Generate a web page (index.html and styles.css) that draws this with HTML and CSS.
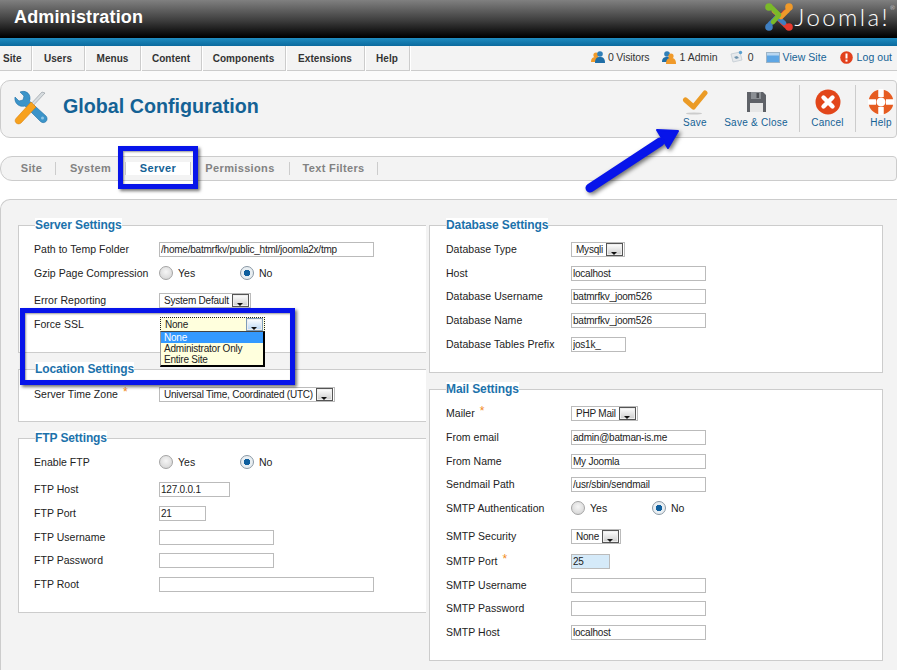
FILE: index.html
```html
<!DOCTYPE html>
<html lang="en">
<head>
<meta charset="utf-8">
<title>Global Configuration</title>
<link rel="stylesheet" href="styles.css">
</head>
<body>
<div class="page">
  <header class="top">
    <h1 class="brand">Administration</h1>
    <div class="logo">
      <svg class="logo-mark" width="30" height="30" viewBox="0 0 30 30" fill="none" stroke-width="4.600" stroke-linecap="round" stroke-linejoin="round">
        <path stroke="#e8392e" d="M25 25 Q22 25 20 22 L15 17 L21 10"/>
        <path stroke="#3f7fc1" d="M5 25 Q5 22 8 20 L13 15 L20 21"/>
        <path stroke="#f09a2a" d="M25 5 Q25 8 22 10 L17 15 L10 9"/>
        <path stroke="#7ab929" d="M5 5 Q8 5 10 8 L15 13 L9 20"/>
        <circle cx="5" cy="5" r="3.800" fill="#7ab929"/><circle cx="25" cy="5" r="3.800" fill="#f09a2a"/>
        <circle cx="5" cy="25" r="3.800" fill="#3f7fc1"/><circle cx="25" cy="25" r="3.800" fill="#e8392e"/>
      </svg>
      <span class="logo-text">Joomla!<sup class="tm">®</sup></span>
    </div>
  </header>
  <div class="band"></div>
  <nav class="menu">
    <ul class="menu-list">
      <li class="first">Site</li><li>Users</li><li>Menus</li><li>Content</li><li>Components</li><li>Extensions</li><li>Help</li>
    </ul>
    <div class="status">
      <span class="stat stat-visitors"><svg width="14" height="14" viewBox="0 0 14 14"><circle cx="5" cy="5" r="2.600" fill="#f09a2a"/><path d="M0 12c0-4 2-5 5-5s5 1 5 5z" fill="#f09a2a"/><circle cx="9" cy="4" r="2.800" fill="#2f7fb8"/><path d="M4 13c0-5 2-6 5-6s5 1 5 6z" fill="#1f6ea6"/></svg>0 Visitors</span>
      <span class="stat stat-admin"><svg width="14" height="14" viewBox="0 0 14 14"><circle cx="5" cy="4" r="2.800" fill="#2f7fb8"/><path d="M0 12c0-4 2-5 5-5s5 1 5 5z" fill="#1f6ea6"/><circle cx="9" cy="6" r="2.600" fill="#f09a2a"/><path d="M4 14c0-5 2-6 5-6s5 1 5 6z" fill="#f09a2a"/></svg>1 Admin</span>
      <span class="stat stat-msg"><svg width="13" height="14" viewBox="0 0 13 14"><path d="M1 4l9-2 2 8-9 2z" fill="#e6e9ec" stroke="#c3ccd3" stroke-width=".8"/><path d="M4 7l3-1 2 2-3 1z" fill="#6f93ad"/><circle cx="10.500" cy="2.500" r="1.700" fill="#5aa0d0"/></svg>0</span>
      <a class="stat link stat-view"><svg width="14" height="11" viewBox="0 0 14 11"><rect x=".5" y=".5" width="13" height="10" fill="#5ea6e4" stroke="#9db4c6"/><rect x="1" y="1" width="12" height="2.500" fill="#b8d6f0"/></svg>View Site</a>
      <a class="stat link stat-out"><svg width="13" height="13" viewBox="0 0 13 13"><circle cx="6.500" cy="6.500" r="6.300" fill="#e2401c"/><rect x="5.500" y="2.500" width="2" height="5" fill="#fff"/><rect x="5.500" y="8.600" width="2" height="2" fill="#fff"/></svg>Log out</a>
    </div>
  </nav>
  <div class="strip"></div>
  <section class="toolbar">
    <div class="title">
      <svg width="38" height="38" viewBox="0 0 38 38">
        <path d="M3 9l4 4 4-1 1-4-4-4c5-2 10 1 10 6 0 1 0 2-.6 3L34 28c1.400 1.600 1.500 4 0 5.500-1.500 1.500-4 1.500-5.500 0L13 18c-6 1.600-11-3-10-9z" fill="#3b94c9" stroke="#1f6fa6" stroke-width=".6"/>
        <circle cx="30.500" cy="30" r="1.500" fill="#8cc4e6"/>
        <path d="M30 4l3 1-14 15-2-2z" fill="#d8dde0" stroke="#7a858c" stroke-width=".5"/>
        <path d="M19 14l5 5L9 35c-1.500 1.200-4 1.200-5-.2-1.200-1.400-1-3.300.2-4.500z" fill="#f7a11d" stroke="#d9820c" stroke-width=".6"/>
      </svg>
      <h2>Global Configuration</h2>
    </div>
    <div class="tools">
      <a class="tool tool-save"><svg width="26" height="26" viewBox="0 0 26 26"><ellipse cx="12" cy="24.500" rx="8" ry="1" fill="#ccc"/><path d="M3.500 11l8 7L23 4" fill="none" stroke="#eb9b26" stroke-width="5" stroke-linecap="round" stroke-linejoin="round"/></svg>Save</a>
      <a class="tool tool-close"><svg width="26" height="26" viewBox="0 0 26 26"><path d="M4 3h16l3 3v17H4z" fill="#5f6268"/><rect x="8" y="3" width="10" height="7" fill="#8b8f94"/><rect x="13.500" y="4" width="2.500" height="5" fill="#4a4d52"/><rect x="7" y="14" width="13" height="9" fill="#e6e6e6"/></svg>Save &amp; Close</a>
      <a class="tool tool-cancel"><svg width="26" height="26" viewBox="0 0 26 26"><circle cx="13" cy="13" r="12.500" fill="#e2461a"/><path d="M8.500 8.500l9 9M17.500 8.500l-9 9" stroke="#fff" stroke-width="4.400" stroke-linecap="round"/></svg>Cancel</a>
      <a class="tool tool-help"><svg width="26" height="26" viewBox="0 0 26 26"><circle cx="13" cy="13" r="12.500" fill="#fff"/><circle cx="13" cy="13" r="8.500" fill="none" stroke="#e65c21" stroke-width="8"/><path d="M13 0v8M13 18v8M0 13h8M18 13h8" stroke="#fff" stroke-width="5.500"/></svg>Help</a>
    </div>
  </section>
  <nav class="tabs">
    <a class="tab">Site</a><a class="tab">System</a><a class="tab active"><span>Server</span></a><a class="tab">Permissions</a><a class="tab">Text Filters</a>
  </nav>
  <main class="content">
    <div class="col col-left">
      <fieldset class="panel server">
        <legend>Server Settings</legend>
        <div class="row"><label>Path to Temp Folder</label><input class="w-215" value="/home/batmrfkv/public_html/joomla2x/tmp" readonly></div>
        <div class="row"><label>Gzip Page Compression</label><div class="radios"><span class="radio">Yes</span><span class="radio on">No</span></div></div>
        <div class="row gap"><label>Error Reporting</label><div class="select"><span>System Default</span><i class="arrow"></i></div></div>
        <div class="row"><label>Force SSL</label>
          <div class="select open"><span class="val">None</span><i class="arrow hot"></i>
            <ul class="drop"><li class="sel">None</li><li>Administrator Only</li><li>Entire Site</li></ul>
          </div>
        </div>
      </fieldset>
      <fieldset class="panel location">
        <legend>Location Settings</legend>
        <div class="row"><label>Server Time Zone <em>*</em></label><div class="select"><span>Universal Time, Coordinated (UTC)</span><i class="arrow"></i></div></div>
      </fieldset>
      <fieldset class="panel ftp">
        <legend>FTP Settings</legend>
        <div class="row"><label>Enable FTP</label><div class="radios"><span class="radio">Yes</span><span class="radio on">No</span></div></div>
        <div class="row gap"><label>FTP Host</label><input class="w-71" value="127.0.0.1" readonly></div>
        <div class="row"><label>FTP Port</label><input class="w-47" value="21" readonly></div>
        <div class="row"><label>FTP Username</label><input class="w-115" readonly></div>
        <div class="row tight"><label>FTP Password</label><input class="w-115" readonly></div>
        <div class="row"><label>FTP Root</label><input class="w-215" readonly></div>
      </fieldset>
    </div>
    <div class="col col-right">
      <fieldset class="panel database">
        <legend>Database Settings</legend>
        <div class="row"><label>Database Type</label><div class="select"><span>Mysqli</span><i class="arrow"></i></div></div>
        <div class="row"><label>Host</label><input class="w-135" value="localhost" readonly></div>
        <div class="row tight"><label>Database Username</label><input class="w-135" value="batmrfkv_joom526" readonly></div>
        <div class="row"><label>Database Name</label><input class="w-135" value="batmrfkv_joom526" readonly></div>
        <div class="row"><label>Database Tables Prefix</label><input class="w-55" value="jos1k_" readonly></div>
      </fieldset>
      <fieldset class="panel mail">
        <legend>Mail Settings</legend>
        <div class="row"><label>Mailer <em>*</em></label><div class="select"><span>PHP Mail</span><i class="arrow"></i></div></div>
        <div class="row"><label>From email</label><input class="w-135" value="admin@batman-is.me" readonly></div>
        <div class="row"><label>From Name</label><input class="w-135" value="My Joomla" readonly></div>
        <div class="row tight"><label>Sendmail Path</label><input class="w-135" value="/usr/sbin/sendmail" readonly></div>
        <div class="row"><label>SMTP Authentication</label><div class="radios"><span class="radio">Yes</span><span class="radio on">No</span></div></div>
        <div class="row gap4"><label>SMTP Security</label><div class="select"><span>None</span><i class="arrow"></i></div></div>
        <div class="row gap1"><label>SMTP Port <em>*</em></label><input class="w-39 focus" value="25" readonly></div>
        <div class="row"><label>SMTP Username</label><input class="w-135" readonly></div>
        <div class="row tight"><label>SMTP Password</label><input class="w-135" readonly></div>
        <div class="row"><label>SMTP Host</label><input class="w-135" value="localhost" readonly></div>
      </fieldset>
    </div>
  </main>
  <div class="mark mark-tab"></div>
  <div class="mark mark-ssl"></div>
  <svg class="pointer" width="110" height="75" viewBox="0 0 110 75">
    <path d="M6 63 L76 17" stroke="#0714ea" stroke-width="9" stroke-linecap="round"/>
    <path d="M94 6 L73 5 L84 23z" fill="#0714ea" stroke="#0714ea" stroke-width="2" stroke-linejoin="round"/>
  </svg>
</div>
</body>
</html>
```
FILE: styles.css
```css
* { box-sizing: border-box; }
html, body { margin: 0; padding: 0; background: #fff; }
body { font-family: "Liberation Sans", Arial, sans-serif; font-size: 11px; color: #222; }
.page { position: relative; width: 897px; height: 670px; overflow: hidden; }

.top { height: 38px; background: linear-gradient(#808080, #3c3c3c 55%, #000 98%); display: flex; justify-content: space-between; align-items: center; }
.brand { margin: 0 0 3px 14px; font-size: 18px; font-weight: bold; letter-spacing: .15px; color: #fff; }
.logo { display: flex; align-items: center; margin-right: 2px; gap: 1px; height: 38px; padding-bottom: 4px; }
.logo-text { font-family: Lato, sans-serif; font-weight: 300; font-size: 24px; letter-spacing: 2.400px; color: #fff; line-height: 1; }
.tm { font-size: 6px; vertical-align: top; letter-spacing: 0; }

.band { height: 8px; background: linear-gradient(#1f8cc0, #0b6a9e); }

.menu { height: 25px; background: #f3f3f3; border-bottom: 1px solid #ccc; display: flex; justify-content: space-between; }
.menu-list { list-style: none; margin: 0; padding: 0; display: grid; grid-template-columns: 32px 53px 56px 61px 84px 79px 45px; }
.menu-list li { border-right: 1px solid #ccc; box-shadow: 1px 0 0 #fff; font-weight: bold; font-size: 10px; letter-spacing: .05px; color: #333; text-align: center; line-height: 25px; }
.menu-list li.first { text-align: left; padding-left: 3px; }
.status { display: flex; align-items: center; padding: 0 5px 2px 0; font-size: 10.5px; letter-spacing: .05px; }
.stat { display: flex; align-items: center; gap: 3px; color: #333; }
.stat-visitors { letter-spacing: -.15px; }
.stat-admin { margin-left: 13px; }
.stat-msg { margin-left: 12px; gap: 5px; }
.stat-view { margin-left: 12px; }
.stat-out { margin-left: 13px; gap: 4px; }
.link { color: #146295; }

.strip { height: 9px; background: #fbfbfb; }

.toolbar { height: 58px; background: #f3f3f3; border: 1px solid #ccc; border-radius: 10px 4px 4px 10px; display: flex; justify-content: space-between; align-items: stretch; }
.title { display: flex; align-items: center; padding-left: 11px; gap: 13px; }
.title svg { margin-top: -4px; }
.title h2 { margin: -6px 0 0; font-size: 19.7px; font-weight: bold; color: #146295; }
.tools { display: flex; align-items: flex-start; padding-top: 4px; margin-right: -10px; }
.tool { position: relative; display: flex; flex-direction: column; align-items: center; padding-top: 4px; font-size: 10px; letter-spacing: .25px; color: #146295; height: 47px; line-height: 12px; gap: 2px; }
.tool-save { width: 50px; margin-right: 2px; }
.tool-close { width: 68px; margin-right: 9px; }
.tool-cancel { width: 56px; border-left: 1px solid #ccc; }
.tool-help { width: 51px; border-left: 1px solid #ccc; }

.tabs { margin-top: 18px; height: 25px; background: #f3f3f3; border: 1px solid #ccc; border-radius: 12px 4px 4px 12px; display: grid; grid-template-columns: 48px 70px 65px 99px 88px; padding-left: 7px; align-items: center; }
.tab { height: 13px; border-right: 1px solid #ccc; text-align: center; font-size: 11px; font-weight: bold; letter-spacing: .35px; line-height: 13px; color: #828282; }
.tab.active { color: #146295; background: #fff; }

.content { margin-top: 18px; width: 920px; height: 471px; background: #f3f3f3; border: 1px solid #ccc; border-width: 1px 0 0 1px; border-radius: 10px 0 0 0; display: flex; padding-top: 18px; }
.col { flex: none; }
.col-left { width: 425px; padding-left: 17px; overflow: hidden; }
.col-right { width: 454px; margin-left: 3px; }

.panel { margin: 0; padding: 0 0 0 15px; background: #fff; border: 1px solid #ccc; min-width: 0; }
.col-right .panel { padding-left: 16px; }
legend { padding: 0; margin-left: 1px; font-size: 12px; font-weight: bold; line-height: 14px; letter-spacing: -.1px; color: #1c72ab; background: #fff; }
.col-right legend { margin-left: 0; }
.col-left .panel { width: 430px; }
.server { height: 135px; }
.location { height: 60px; margin-top: 9px; }
.ftp { height: 182px; margin-top: 9px; }
.database { height: 155px; }
.mail { height: 279px; margin-top: 9px; }

.row { display: flex; align-items: center; height: 24px; margin-top: 0; }
.row.gap { margin-top: 3px; }
.row.gap1 { margin-top: 1px; }
.row.gap4 { margin-top: 4px; }
.row.tight { margin-top: -1px; }
.panel > legend + .row { margin-top: 5px; }
.location > legend + .row { margin-top: 6px; }
.row label { flex: none; width: 125px; letter-spacing: .03px; font-size: 10.5px; }
em { font-style: normal; font-size: 12px; line-height: 0; color: #f28a1c; margin-left: 2px; vertical-align: 2px; }

input { height: 15px; padding: 0 1px; border: 1px solid #bbb; background: #fff; font: 10px "Liberation Sans", Arial, sans-serif; letter-spacing: -.22px; color: #222; outline: 0; }
input.focus { background: #d5eaf9; }
.w-215 { width: 215px; }
.w-135 { width: 135px; }
.w-115 { width: 115px; }
.w-71 { width: 71px; }
.w-55 { width: 55px; }
.w-47 { width: 47px; }
.w-39 { width: 39px; }

.radios { display: grid; grid-template-columns: 81px auto; }
.radio { display: flex; align-items: center; gap: 5px; font-size: 10.5px; }
.radio::before { content: ""; width: 12px; height: 12px; border-radius: 50%; border: 1px solid #a4a4a4; background: radial-gradient(circle at 50% 40%, #f6f6f6, #cfcfcf); }
.radio.on::before { background: radial-gradient(circle, #0f5f9e 0 3px, #e8eef2 3.500px); border-color: #8a98a4; }

.select { position: relative; display: inline-flex; align-items: center; justify-content: space-between; gap: 3px; height: 15px; padding: 0 1px 0 4px; border: 1px solid #bbb; background: #fff; font-size: 10px; letter-spacing: -.22px; }
.arrow { position: relative; display: block; width: 17px; height: 13px; border: 1px solid #555; background: linear-gradient(#fff, #ccc); box-shadow: inset 0 0 0 1px #eee; }
.arrow::after { content: ""; position: absolute; left: 4px; bottom: 0; border: 3px solid transparent; border-top-color: #111; border-bottom: 0; }
.arrow.hot { border-color: #7f9db9; background: linear-gradient(#fff, #b9d7f5); }
.select.open { width: 105px; margin-left: 1px; background: #ffd; border: 1px dotted #222; }
.select.open .val { line-height: 14px; padding-top: 1px; }
.drop { position: absolute; left: -1px; top: 13px; width: 105px; margin: 0; padding: 0; list-style: none; background: #ffd; border: 1px solid #444; border-width: 1px 2px 2px 1px; border-left-color: #999; border-right-color: #000; border-bottom-color: #000; line-height: 11px; z-index: 2; }
.drop li { padding-left: 3px; }
.drop .sel { background: #39f; color: #fff; }

.mark { position: absolute; border: 5px solid #0714ea; box-shadow: 2px 2px 3px rgba(0,0,0,.55), inset 1px 1px 2px rgba(0,0,0,.4); z-index: 3; }
.mark-tab { left: 118px; top: 146px; width: 80px; height: 43px; }
.mark-ssl { left: 20px; top: 308px; width: 275px; height: 77px; }
.pointer { position: absolute; left: 584px; top: 125px; z-index: 3; filter: drop-shadow(2px 2px 2px rgba(0,0,0,.55)); }
```
